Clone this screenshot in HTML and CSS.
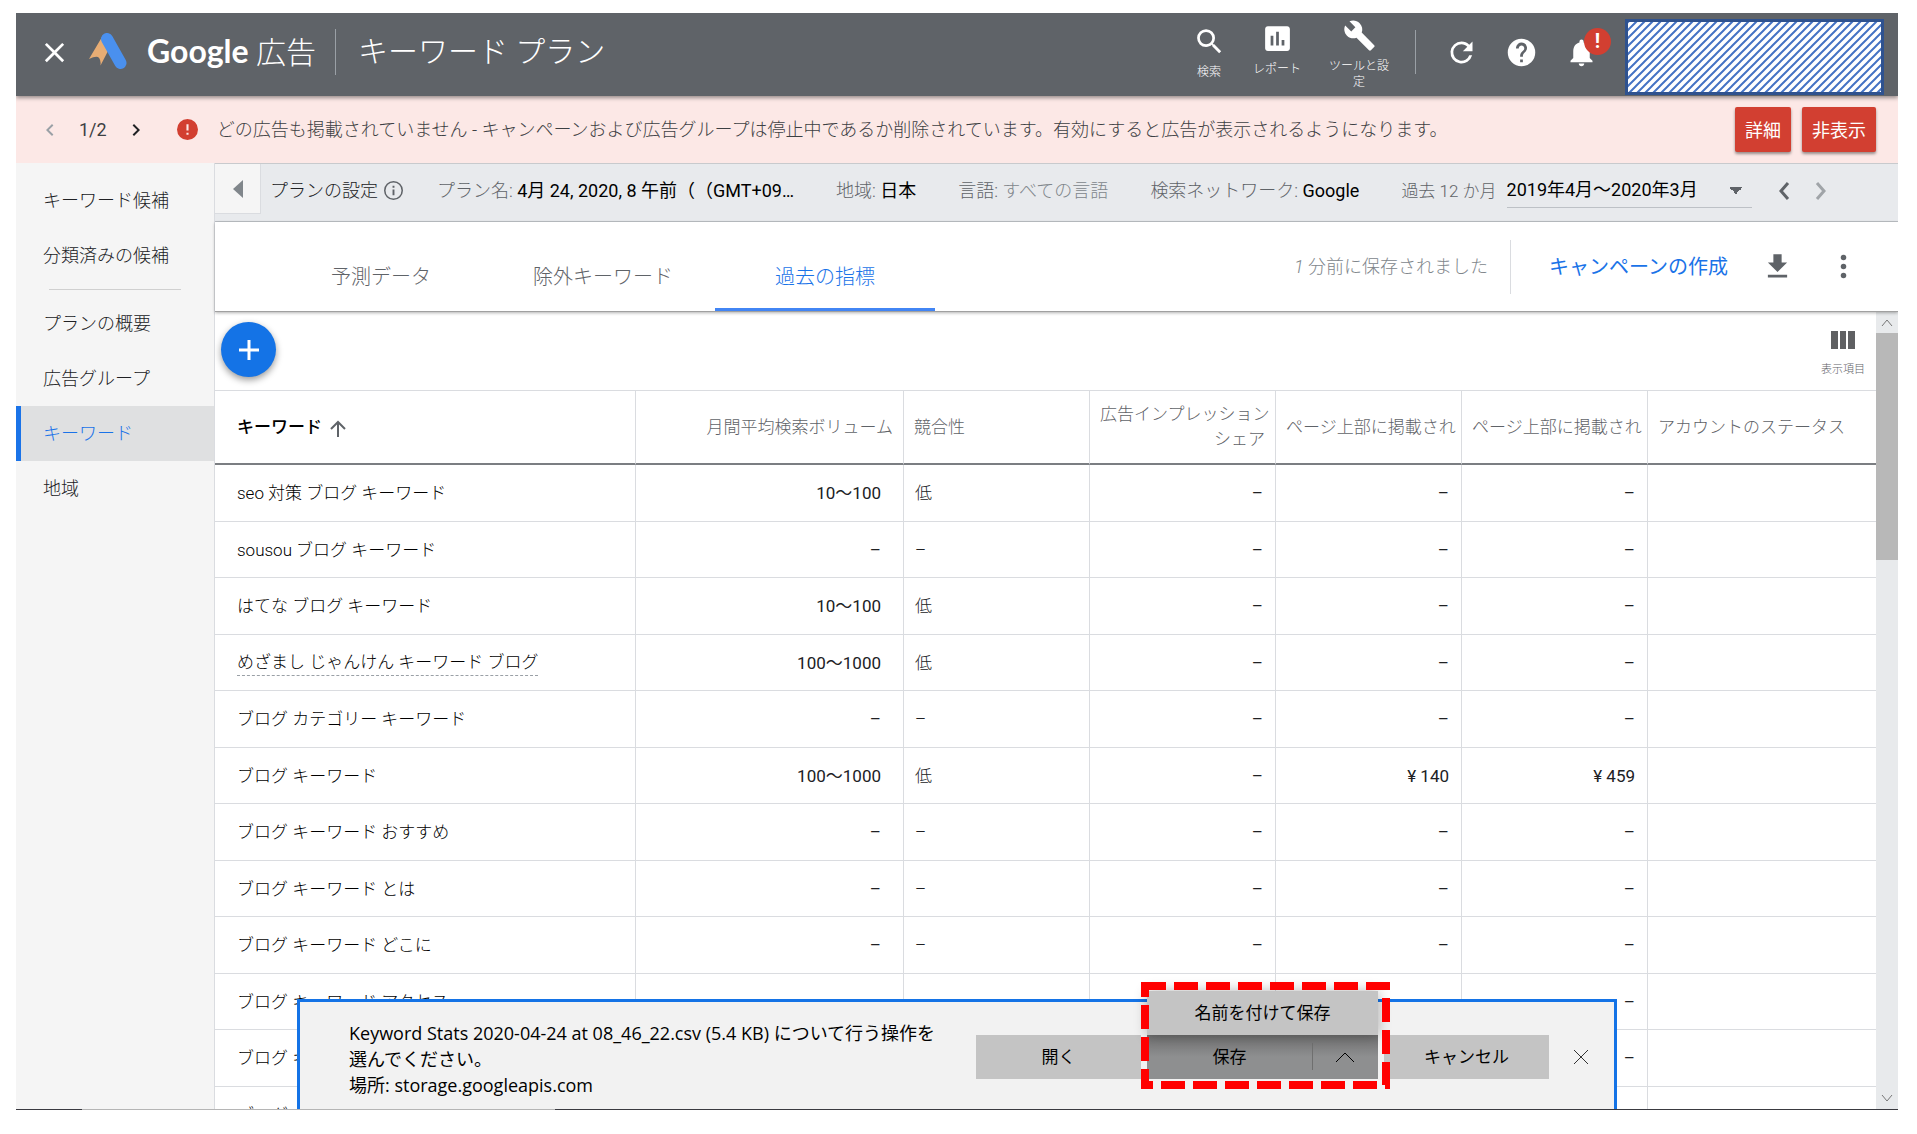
FILE: index.html
```
<!DOCTYPE html>
<html lang="ja">
<head>
    <meta charset="UTF-8">
    <meta name="viewport" content="width=device-width, initial-scale=1.0">
    <title>キーワード プラン - Google 広告</title>
    <link rel="stylesheet" href="styles.css">
</head>
<body>
    <div class="app">
        <header class="topbar">
            <button class="icon-btn close-btn" aria-label="閉じる">
                <svg viewBox="0 0 24 24"><path d="M19 6.4L17.6 5 12 10.6 6.4 5 5 6.4 10.6 12 5 17.6 6.4 19 12 13.4 17.6 19 19 17.6 13.4 12z"/></svg>
            </button>
            <svg class="logo" viewBox="0 0 38 38">
                <path d="M13 4L0 26q6-3 9-2 3 2 2.500 8.500L19 18z" fill="#e8ad74"/>
                <path d="M18 6l13.500 24" stroke="#4a90ee" stroke-width="12" stroke-linecap="round"/>
            </svg>
            <span class="brand"><span class="brand-name">Google</span> 広告</span>
            <h1 class="page-title">キーワード プラン</h1>

            <nav class="tools">
                <button class="tool tool-search">
                    <svg viewBox="0 0 24 24"><path d="M15.500 14h-.79l-.28-.27A6.470 6.470 0 0 0 16 9.500 6.500 6.500 0 1 0 9.500 16c1.610 0 3.090-.59 4.230-1.570l.27.28v.79l5 4.990L20.490 19l-4.990-5zm-6 0C7.010 14 5 11.990 5 9.500S7.010 5 9.500 5 14 7.010 14 9.500 11.990 14 9.500 14z"/></svg>
                    <span>検索</span>
                </button>
                <button class="tool tool-report">
                    <svg viewBox="0 0 24 24"><path d="M19 3H5c-1.100 0-2 .9-2 2v14c0 1.100.9 2 2 2h14c1.100 0 2-.9 2-2V5c0-1.100-.9-2-2-2zM9 17H7v-7h2v7zm4 0h-2V7h2v10zm4 0h-2v-4h2v4z"/></svg>
                    <span>レポート</span>
                </button>
                <button class="tool tool-settings">
                    <svg viewBox="0 0 24 24"><path d="M22.700 19l-9.100-9.100c.9-2.300.4-5-1.500-6.900-2-2-5-2.400-7.400-1.300L9 6 6 9 1.600 4.700C.4 7.100.9 10.100 2.900 12.100c1.900 1.900 4.600 2.400 6.900 1.500l9.100 9.100c.4.4 1 .4 1.400 0l2.300-2.300c.5-.4.5-1.100.1-1.400z"/></svg>
                    <span>ツールと設定</span>
                </button>
            </nav>

            <div class="actions">
                <button class="icon-btn" aria-label="更新">
                    <svg viewBox="0 0 24 24"><path d="M17.650 6.350A7.960 7.960 0 0 0 12 4a8 8 0 1 0 7.730 10h-2.080A6 6 0 1 1 12 6c1.660 0 3.140.69 4.220 1.780L13 11h7V4l-2.350 2.350z"/></svg>
                </button>
                <button class="icon-btn" aria-label="ヘルプ">
                    <svg viewBox="0 0 24 24"><path d="M12 2a10 10 0 1 0 0 20 10 10 0 0 0 0-20zm1 17h-2v-2h2v2zm2.070-7.750l-.9.920C13.450 12.900 13 13.500 13 15h-2v-.5c0-1.100.45-2.100 1.170-2.830l1.240-1.260A2 2 0 1 0 10 9H8a4 4 0 1 1 7.070 2.250z"/></svg>
                </button>
                <button class="icon-btn bell" aria-label="お知らせ">
                    <svg viewBox="0 0 24 24"><path d="M12 22c1.100 0 2-.9 2-2h-4c0 1.100.89 2 2 2zm6-6v-5c0-3.070-1.640-5.640-4.500-6.320V4a1.500 1.500 0 0 0-3 0v.68C7.630 5.360 6 7.920 6 11v5l-2 2v1h16v-1l-2-2z"/></svg>
                    <span class="badge">!</span>
                </button>
            </div>

            <svg class="account-mask" aria-hidden="true">
                <defs>
                    <pattern id="hatch" width="8" height="8" patternUnits="userSpaceOnUse">
                        <path d="M-2 2l4-4M-1 9L9-1M6 10l4-4" stroke="#4472c4" stroke-width="2"/>
                    </pattern>
                </defs>
                <rect width="100%" height="100%" fill="url(#hatch)"/>
            </svg>
        </header>

        <div class="alert">
            <button class="pager" aria-label="前へ" disabled>
                <svg viewBox="0 0 24 24"><path d="M15.400 7.400L14 6l-6 6 6 6 1.400-1.400L10.800 12z"/></svg>
            </button>
            <span class="count">1/2</span>
            <button class="pager" aria-label="次へ">
                <svg viewBox="0 0 24 24"><path d="M10 6L8.600 7.400l4.600 4.600-4.600 4.600L10 18l6-6z"/></svg>
            </button>
            <svg class="alert-icon" viewBox="2 2 20 20"><path d="M12 2a10 10 0 1 0 0 20 10 10 0 0 0 0-20zm1 15h-2v-2h2v2zm0-4h-2V7h2v6z"/></svg>
            <p class="alert-text">どの広告も掲載されていません - キャンペーンおよび広告グループは停止中であるか削除されています。有効にすると広告が表示されるようになります。</p>
            <button class="alert-btn">詳細</button>
            <button class="alert-btn">非表示</button>
        </div>

        <div class="layout">
            <nav class="sidebar">
                <a href="#">キーワード候補</a>
                <a href="#">分類済みの候補</a>
                <hr>
                <a href="#">プランの概要</a>
                <a href="#">広告グループ</a>
                <a href="#" class="active">キーワード</a>
                <a href="#">地域</a>
            </nav>

            <main class="content">
                <div class="plan-bar">
                    <button class="collapse" aria-label="折りたたむ">
                        <svg viewBox="0 0 10 18"><path d="M10 0v18L0 9z"/></svg>
                    </button>
                    <div class="plan-item plan-settings">プランの設定
                        <svg viewBox="2 2 20 20"><path d="M11 7h2v2h-2zm0 4h2v6h-2zm1-9a10 10 0 1 0 0 20 10 10 0 0 0 0-20zm0 18.400a8.400 8.400 0 1 1 0-16.800 8.400 8.400 0 0 1 0 16.800z"/></svg>
                    </div>
                    <div class="plan-item"><span>プラン名:</span> <b>4月 24, 2020, 8 午前（（GMT+09…</b></div>
                    <div class="plan-item"><span>地域:</span> <b>日本</b></div>
                    <div class="plan-item"><span>言語:</span> <em>すべての言語</em></div>
                    <div class="plan-item"><span>検索ネットワーク:</span> <b>Google</b></div>
                    <div class="plan-item period">
                        <label for="period">過去 12 か月</label>
                        <select id="period">
                            <option>2019年4月～2020年3月</option>
                        </select>
                    </div>
                    <button class="period-nav" aria-label="前の期間">
                        <svg viewBox="0 0 12 18"><path d="M10 1L3 9l7 8"/></svg>
                    </button>
                    <button class="period-nav" aria-label="次の期間" disabled>
                        <svg viewBox="0 0 12 18"><path d="M2 1l7 8-7 8"/></svg>
                    </button>
                </div>

                <div class="tab-bar">
                    <div class="tabs" role="tablist">
                        <button role="tab">予測データ</button>
                        <button role="tab">除外キーワード</button>
                        <button role="tab" class="active" aria-selected="true">過去の指標</button>
                    </div>
                    <span class="saved"><i>1</i> 分前に保存されました</span>
                    <a href="#" class="create">キャンペーンの作成</a>
                    <button class="icon-btn" aria-label="ダウンロード">
                        <svg viewBox="0 0 24 24"><path d="M19 9h-4V3H9v6H5l7 7 7-7zM5 18v2h14v-2H5z"/></svg>
                    </button>
                    <button class="icon-btn" aria-label="その他">
                        <svg viewBox="0 0 24 24"><circle cx="12" cy="5.500" r="2"/><circle cx="12" cy="12" r="2"/><circle cx="12" cy="18.500" r="2"/></svg>
                    </button>
                </div>

                <div class="data-area">
                    <div class="data-scroll">
                        <div class="toolbar">
                            <button class="fab" aria-label="キーワードを追加">
                                <svg viewBox="0 0 20 20"><path d="M10 0v20M0 10h20"/></svg>
                            </button>
                            <button class="columns-btn">
                                <svg viewBox="0 0 24 18"><path d="M0 0h7v18H0zM9 0h6v18H9zM17 0h7v18h-7z"/></svg>
                                表示項目
                            </button>
                        </div>

                        <table class="keywords">
                            <colgroup>
                                <col class="col-keyword">
                                <col class="col-volume">
                                <col class="col-metric">
                                <col class="col-metric">
                                <col class="col-metric">
                                <col class="col-metric">
                                <col>
                            </colgroup>
                            <thead>
                                <tr>
                                    <th class="sorted">キーワード <svg viewBox="0 0 16 18"><path d="M8 17V2M1 9l7-7 7 7"/></svg></th>
                                    <th class="num">月間平均検索ボリューム</th>
                                    <th>競合性</th>
                                    <th class="num">広告インプレッション<br>シェア</th>
                                    <th>ページ上部に掲載され</th>
                                    <th>ページ上部に掲載され</th>
                                    <th>アカウントのステータス</th>
                                </tr>
                            </thead>
                            <tbody>
                                <tr><td>seo 対策 ブログ キーワード</td><td>10～100</td><td>低</td><td>–</td><td>–</td><td>–</td><td></td></tr>
                                <tr><td>sousou ブログ キーワード</td><td>–</td><td>–</td><td>–</td><td>–</td><td>–</td><td></td></tr>
                                <tr><td>はてな ブログ キーワード</td><td>10～100</td><td>低</td><td>–</td><td>–</td><td>–</td><td></td></tr>
                                <tr><td><span class="hint">めざまし じゃんけん キーワード ブログ</span></td><td>100～1000</td><td>低</td><td>–</td><td>–</td><td>–</td><td></td></tr>
                                <tr><td>ブログ カテゴリー キーワード</td><td>–</td><td>–</td><td>–</td><td>–</td><td>–</td><td></td></tr>
                                <tr><td>ブログ キーワード</td><td>100～1000</td><td>低</td><td>–</td><td>¥ 140</td><td>¥ 459</td><td></td></tr>
                                <tr><td>ブログ キーワード おすすめ</td><td>–</td><td>–</td><td>–</td><td>–</td><td>–</td><td></td></tr>
                                <tr><td>ブログ キーワード とは</td><td>–</td><td>–</td><td>–</td><td>–</td><td>–</td><td></td></tr>
                                <tr><td>ブログ キーワード どこに</td><td>–</td><td>–</td><td>–</td><td>–</td><td>–</td><td></td></tr>
                                <tr><td>ブログ キーワード アクセス</td><td>–</td><td>–</td><td>–</td><td>–</td><td>–</td><td></td></tr>
                                <tr><td>ブログ キーワード</td><td>–</td><td>–</td><td>–</td><td>–</td><td>–</td><td></td></tr>
                                <tr><td>ブログ</td><td></td><td></td><td></td><td></td><td></td><td></td></tr>
                            </tbody>
                        </table>
                    </div>

                    <div class="scrollbar" aria-hidden="true">
                        <svg viewBox="0 0 12 8"><path d="M1 7l5-6 5 6"/></svg>
                        <div class="thumb"></div>
                        <svg viewBox="0 0 12 8"><path d="M1 1l5 6 5-6"/></svg>
                    </div>
                </div>
            </main>
        </div>

        <!-- Browser download prompt -->
        <div class="download" role="dialog">
            <p>Keyword Stats 2020-04-24 at 08_46_22.csv (5.4 KB) について行う操作を<br>選んでください。<br>場所: storage.googleapis.com</p>
            <div class="download-actions">
                <button>開く</button>
                <div class="save-group">
                    <button class="save-as">名前を付けて保存</button>
                    <button class="save">保存</button>
                    <button class="save-more" aria-label="保存オプション">
                        <svg viewBox="0 0 20 12"><path d="M1 11l9-9 9 9"/></svg>
                    </button>
                    <svg class="highlight" viewBox="0 0 249 107"><rect x="4" y="4" width="241" height="99"/></svg>
                </div>
                <button>キャンセル</button>
            </div>
            <button class="dismiss" aria-label="閉じる">
                <svg viewBox="0 0 16 16"><path d="M1 1l14 14M15 1L1 15"/></svg>
            </button>
        </div>
        <div class="edge"></div>
    </div>
</body>
</html>
```
FILE: styles.css
```
:root {
    --blue: #1a73e8;
    --red: #d23f31;
    --line: #dadce0;
    --text: #202124;
    --muted: #5f6368;
}

* {
    box-sizing: border-box;
}

body {
    margin: 0;
    height: 100vh;
    padding: 13px 19px 24px 16px;
    background: #fff;
    color: var(--text);
    font-family: Roboto, "Noto Sans CJK JP", sans-serif;
    font-size: 18px;
    font-weight: 300;
    line-height: 26px;
}

button {
    border: none;
    padding: 0;
    background: none;
    color: inherit;
    font: inherit;
    cursor: pointer;
}

a {
    text-decoration: none;
}

svg {
    flex: none;
}

.app {
    position: relative;
    display: flex;
    flex-direction: column;
    height: 100%;
    overflow: hidden;
}

.icon-btn svg {
    display: block;
    width: 33px;
    height: 33px;
    fill: currentColor;
}

/* Top bar */
.topbar {
    position: relative;
    z-index: 1;
    display: flex;
    align-items: center;
    flex: none;
    height: 83px;
    padding: 0 14px 5px 22px;
    background: #5f6368;
    color: #fff;
    box-shadow: 0 2px 4px rgba(0, 0, 0, 0.4);
}

.logo {
    width: 38px;
    height: 38px;
    margin: 0 20px 0 18px;
    fill: none;
}

.brand {
    padding-right: 19px;
    border-right: 1px solid #9aa0a6;
    font-size: 30px;
    line-height: 44px;
    white-space: nowrap;
}

.brand-name {
    font-family: Lato, sans-serif;
    font-size: 32px;
    font-weight: 700;
}

.page-title {
    margin: 0 auto 0 22px;
    font-size: 30px;
    font-weight: 300;
    line-height: 44px;
    white-space: nowrap;
}

.tools {
    display: flex;
    align-self: flex-start;
    margin-right: 26px;
}

.tool {
    display: flex;
    flex-direction: column;
    align-items: center;
    width: 60px;
    font-size: 12px;
    line-height: 16px;
}

.tool svg {
    width: 33px;
    height: 33px;
    fill: #fff;
}

.tool-search {
    padding-top: 12px;
    gap: 6px;
}

.tool-report {
    padding-top: 9px;
    margin: 0 22px 0 8px;
    gap: 6px;
}

.tool-settings {
    padding-top: 6px;
    gap: 6px;
}

.actions {
    display: flex;
    align-items: center;
    gap: 27px;
    height: 44px;
    padding-left: 29px;
    margin-right: 27px;
    border-left: 1px solid #9aa0a6;
}

.bell {
    position: relative;
}

.badge {
    position: absolute;
    top: -8px;
    right: -13px;
    width: 27px;
    height: 27px;
    border-radius: 50%;
    background: var(--red);
    font-size: 20px;
    font-weight: 700;
    line-height: 27px;
    text-align: center;
}

.account-mask {
    align-self: flex-start;
    width: 259px;
    height: 76px;
    margin-top: 6px;
    border: 3px solid #2f528f;
    background: #fff;
}

/* Alert */
.alert {
    display: flex;
    align-items: center;
    flex: none;
    height: 67px;
    padding: 0 22px;
    background: #fce8e6;
    color: #3c4043;
}

.pager svg {
    display: block;
    width: 24px;
    height: 24px;
    fill: var(--text);
}

.pager:disabled svg {
    fill: #9aa0a6;
}

.count {
    margin: 0 17px;
    font-weight: 400;
}

.alert-icon {
    width: 21px;
    height: 21px;
    margin: 0 19px 0 29px;
    fill: var(--red);
}

.alert-text {
    flex: 1;
    margin: 0;
    white-space: nowrap;
}

.alert-btn {
    height: 45px;
    padding: 2px 10px 0;
    margin-left: 11px;
    border-radius: 2px;
    background: var(--red);
    color: #fff;
    font-weight: 400;
    box-shadow: 0 2px 3px rgba(0, 0, 0, 0.4);
}

.layout {
    display: flex;
    flex: 1;
    min-height: 0;
}

/* Sidebar */
.sidebar {
    flex: none;
    width: 199px;
    padding-top: 10px;
    border-right: 1px solid var(--line);
    background: #f5f5f5;
}

.sidebar a {
    display: block;
    padding-left: 22px;
    border-left: 5px solid transparent;
    color: var(--text);
    line-height: 55px;
}

.sidebar a.active {
    border-color: var(--blue);
    background: #dfe0e1;
    color: var(--blue);
}

.sidebar hr {
    height: 1px;
    margin: 6px 33px;
    border: none;
    background: #d0d0d0;
}

.content {
    display: flex;
    flex: 1;
    flex-direction: column;
    min-width: 0;
}

/* Plan bar */
.plan-bar {
    display: flex;
    align-items: center;
    flex: none;
    height: 59px;
    padding-bottom: 4px;
    border-top: 1px solid #c8cacd;
    border-bottom: 1px solid #bdc1c6;
    background: #e8eaed;
    text-spacing-trim: space-all;
}

.collapse {
    display: flex;
    align-items: center;
    justify-content: center;
    align-self: flex-start;
    width: 46px;
    height: 50px;
    margin-right: 9px;
    border-right: 1px solid var(--line);
    border-bottom: 1px solid var(--line);
    background: #f5f5f5;
}

.collapse svg {
    width: 10px;
    height: 18px;
    fill: #80868b;
}

.plan-item {
    margin-right: 42px;
    white-space: nowrap;
}

.plan-item span,
.plan-item label {
    color: var(--muted);
}

.plan-item b {
    color: #000;
    font-weight: 400;
}

.plan-item em {
    color: #80868b;
    font-style: normal;
}

.plan-settings {
    display: flex;
    align-items: center;
    gap: 6px;
    margin-right: 34px;
}

.plan-settings svg {
    width: 19px;
    height: 19px;
    fill: var(--muted);
}

.period {
    display: flex;
    align-items: center;
    gap: 10px;
    margin-right: 22px;
}

.period label {
    font-size: 17px;
}

.period select {
    width: 245px;
    height: 35px;
    border: none;
    border-bottom: 1px solid #bdc1c6;
    appearance: none;
    background: linear-gradient(45deg, transparent 50%, var(--muted) 50%) no-repeat right 16px center / 7px 7px,
        linear-gradient(135deg, var(--muted) 50%, transparent 50%) no-repeat right 9px center / 7px 7px;
    color: #000;
    font: inherit;
    font-weight: 400;
}

.period-nav {
    margin: 0 16px 0 0;
    width: 21px;
}

.period-nav svg {
    display: block;
    width: 12px;
    height: 18px;
    margin: auto;
    fill: none;
    stroke: var(--muted);
    stroke-width: 3;
}

.period-nav:disabled svg {
    stroke: #a0a4a8;
}

/* Tabs */
.tab-bar {
    position: relative;
    z-index: 1;
    display: flex;
    align-items: center;
    flex: none;
    height: 90px;
    padding: 0 38px 0 56px;
    border-bottom: 1px solid #a0a0a0;
    color: var(--muted);
    box-shadow: 0 1px 3px rgba(0, 0, 0, 0.3);
}

.tab-bar .icon-btn {
    margin-left: 33px;
}

.tabs {
    display: flex;
    align-self: stretch;
    gap: 2px;
    margin-right: auto;
}

.tabs button {
    width: 220px;
    padding-top: 24px;
    border-bottom: 3px solid transparent;
    font-size: 20px;
}

.tabs .active {
    border-color: #4285f4;
    color: var(--blue);
}

.saved {
    padding-right: 22px;
    border-right: 1px solid var(--line);
    color: #80868b;
    line-height: 54px;
}

.create {
    padding-left: 38px;
    color: var(--blue);
    font-size: 20px;
    font-weight: 400;
}

/* Data */
.data-area {
    display: flex;
    flex: 1;
    min-height: 0;
}

.data-scroll {
    flex: 1;
    min-width: 0;
    overflow: hidden;
}

.toolbar {
    display: flex;
    align-items: center;
    justify-content: space-between;
    height: 79px;
    padding: 0 11px 3px 6px;
    border-bottom: 1px solid var(--line);
}

.fab {
    display: flex;
    align-items: center;
    justify-content: center;
    width: 55px;
    height: 55px;
    border-radius: 50%;
    background: #1473e6;
    box-shadow: 0 3px 7px rgba(0, 0, 0, 0.4);
}

.fab svg {
    width: 20px;
    height: 20px;
    stroke: #fff;
    stroke-width: 3;
}

.columns-btn {
    display: flex;
    flex-direction: column;
    align-items: center;
    gap: 12px;
    padding-top: 10px;
    color: var(--muted);
    font-size: 11px;
    line-height: 18px;
}

.columns-btn svg {
    width: 24px;
    height: 18px;
    fill: #5f6062;
}

.keywords {
    width: 100%;
    border-collapse: separate;
    border-spacing: 0;
    table-layout: fixed;
    font-size: 17px;
}

.col-keyword {
    width: 421px;
}

.col-volume {
    width: 268px;
}

.col-metric {
    width: 186px;
}

.keywords th,
.keywords td {
    padding: 0 12px 0 11px;
    border-right: 1px solid var(--line);
    border-bottom: 1px solid var(--line);
    white-space: nowrap;
    text-align: right;
}

.keywords th:last-child,
.keywords td:last-child {
    border-right: none;
}

.keywords th {
    height: 74px;
    padding: 0 10px;
    border-bottom: 2px solid #7b7e82;
    color: var(--muted);
    font-weight: 300;
    line-height: 25px;
    text-align: left;
}

.keywords .num {
    text-align: right;
}

.keywords .sorted {
    padding-left: 22px;
    color: #000;
    font-weight: 500;
}

.sorted svg {
    width: 16px;
    height: 18px;
    margin-left: 4px;
    vertical-align: -5px;
    fill: none;
    stroke: var(--muted);
    stroke-width: 2;
}

.keywords td {
    height: 56px;
    font-weight: 400;
}

.keywords tr:nth-child(odd) td {
    height: 57px;
}

.keywords td:first-child {
    padding-left: 22px;
    color: #000;
    font-weight: 300;
    text-align: left;
}

.keywords td:nth-child(2) {
    padding-right: 22px;
}

.keywords td:nth-child(3) {
    font-weight: 300;
    text-align: left;
}

.hint {
    display: inline-block;
    border-bottom: 1px dashed #9aa0a6;
}

.scrollbar {
    display: flex;
    flex-direction: column;
    align-items: center;
    flex: none;
    width: 22px;
    padding: 7px 0;
    background: #e8eaec;
}

.scrollbar svg {
    width: 12px;
    height: 8px;
    fill: none;
    stroke: #777;
}

.thumb {
    width: 100%;
    height: 29%;
    margin: 6px 0 auto;
    background: #b8b8b8;
}

/* Download prompt */
.download {
    position: absolute;
    z-index: 2;
    right: 281px;
    bottom: 0;
    left: 281px;
    display: flex;
    align-items: flex-start;
    padding: 18px 25px 12px 49px;
    border: 3px solid #1473e6;
    border-bottom: none;
    background: #f2f2f2;
    color: #000;
    font-family: "Open Sans", "Noto Sans CJK JP", sans-serif;
    font-size: 17px;
    font-weight: 400;
}

.download p {
    flex: 1;
    margin: 0;
    font-size: 18px;
    white-space: nowrap;
}

.download-actions {
    display: flex;
    gap: 6px;
    padding-top: 15px;
}

.download-actions button {
    width: 165px;
    height: 44px;
    background: #c4c4c4;
}

.save-group {
    position: relative;
    display: flex;
    width: 231px;
}

.download-actions .save {
    background: linear-gradient(#6f6f6f, #8e8f90 50%);
}

.download-actions .save-more {
    width: 66px;
    background: linear-gradient(#6f6f6f, #6f6f6f) no-repeat 0 8px / 1px 27px,
        linear-gradient(#6f6f6f, #8e8f90 50%);
}

.save-more svg {
    width: 20px;
    height: 12px;
    fill: none;
    stroke: #000;
}

.download-actions .save-as {
    position: absolute;
    bottom: 100%;
    left: 0;
    width: 100%;
    box-shadow: 0 0 12px rgba(0, 0, 0, 0.3);
}

.highlight {
    position: absolute;
    top: -53px;
    left: -6px;
    width: 249px;
    height: 107px;
    fill: none;
    stroke: #f00;
    stroke-width: 8;
    stroke-dasharray: 24 8;
    stroke-dashoffset: 3;
    pointer-events: none;
}

.dismiss {
    margin: 29px 0 0 24px;
}

.dismiss svg {
    display: block;
    width: 16px;
    height: 16px;
    stroke: #333;
}

/* Sliver of the desktop taskbar */
.edge {
    position: relative;
    z-index: 3;
    flex: none;
    height: 1px;
    background: linear-gradient(to right, #3a3a40 66px, #b5b5b5 66px, #b5b5b5 539px, #3a3a40 539px);
}
```
